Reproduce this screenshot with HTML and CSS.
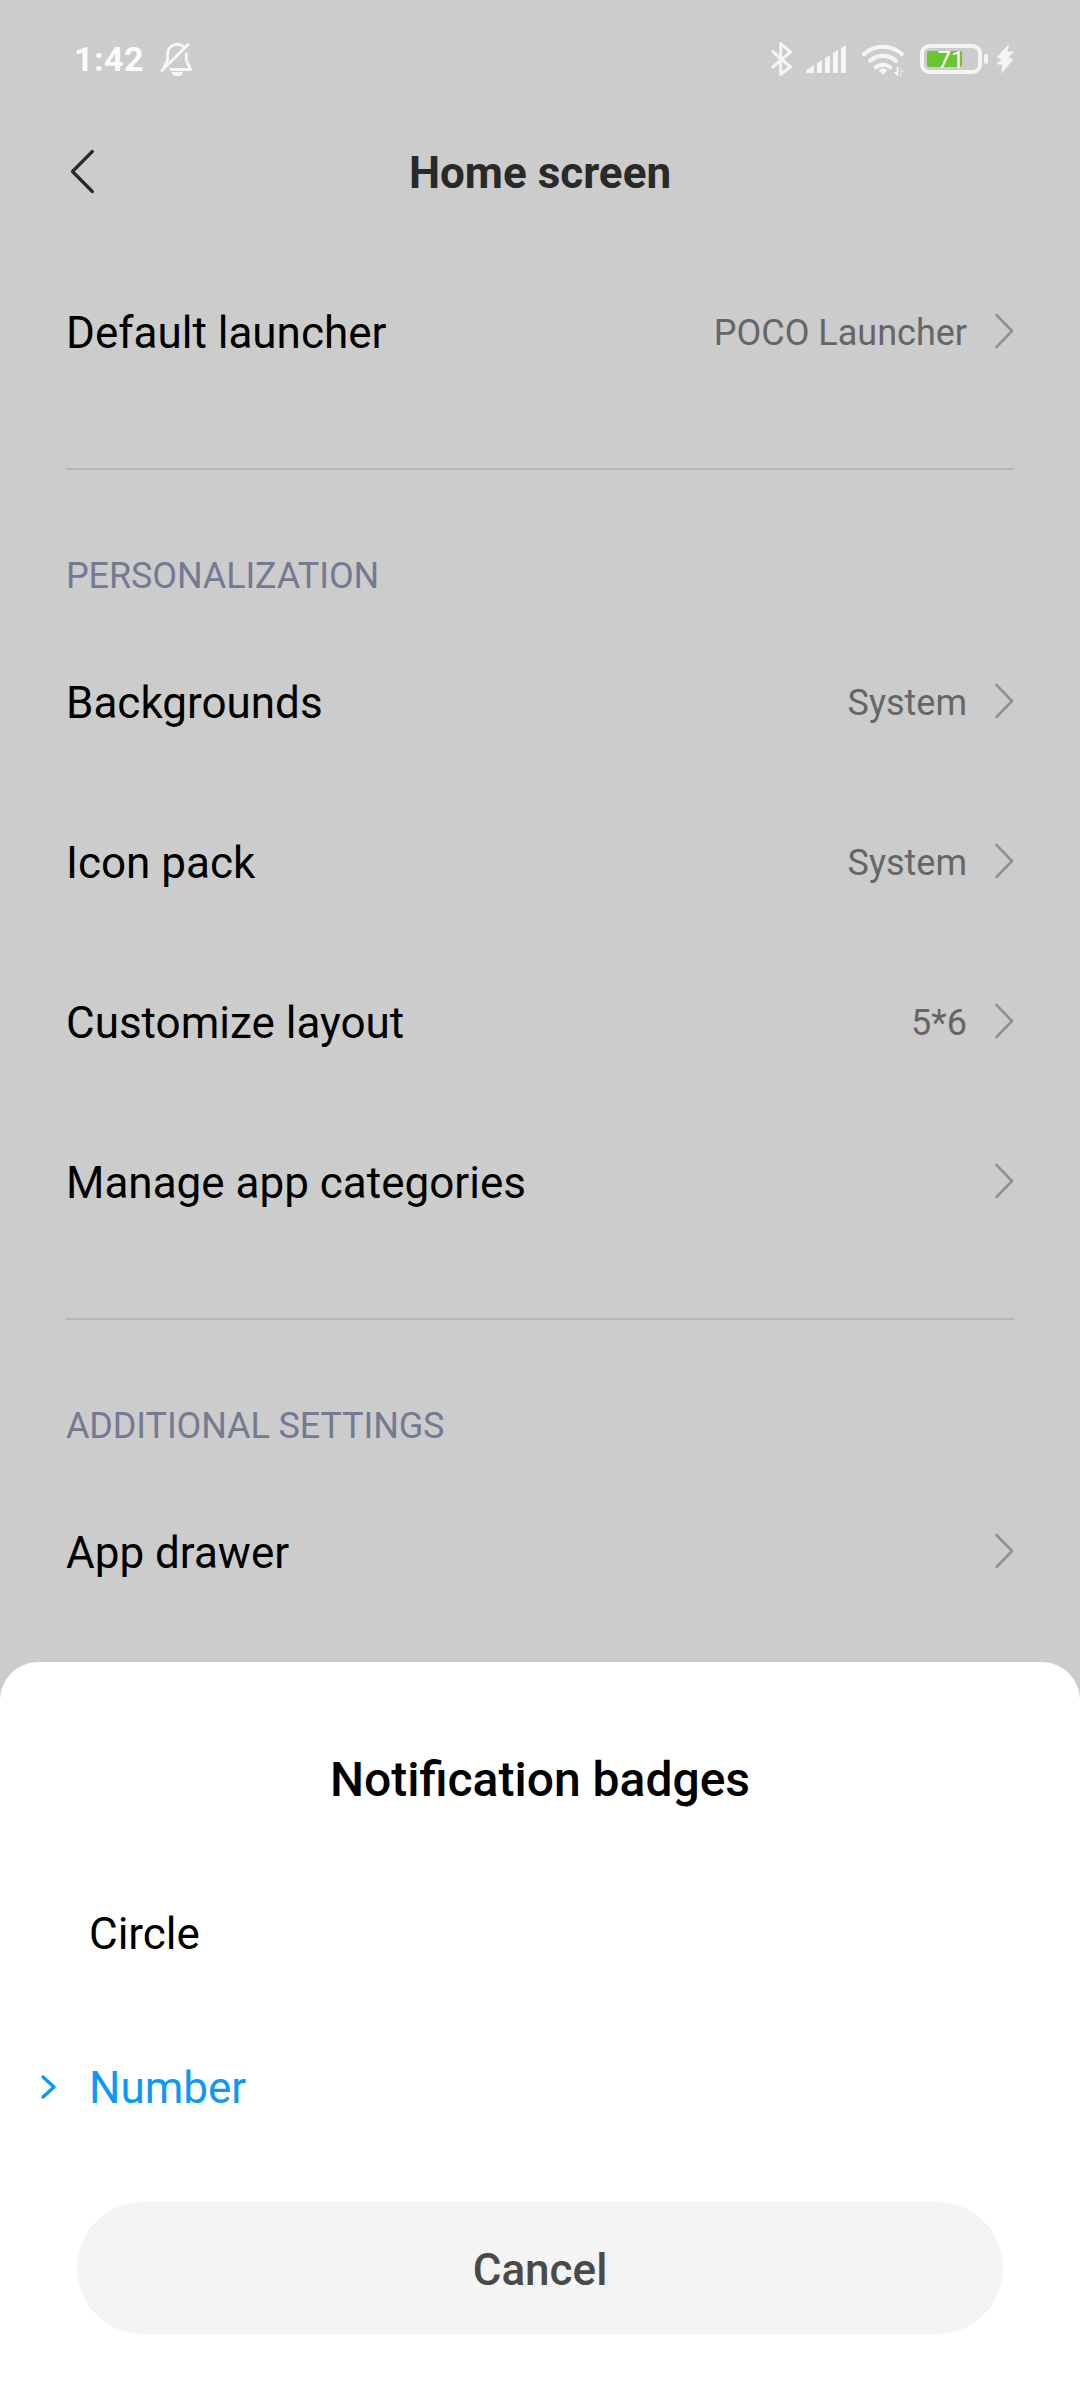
FILE: index.html
```html
<!DOCTYPE html>
<html lang="en">
<head>
<meta charset="utf-8">
<title>Home screen</title>
<link rel="stylesheet" href="styles.css">
</head>
<body>
<div class="screen">
  <header class="status">
    <div class="status-left">
      <span class="time">1:42</span>
      <svg class="bell" width="36" height="36" viewBox="158 41 36 36" fill="none" stroke="#f7f7f7" stroke-width="2.9" stroke-linecap="round" stroke-linejoin="round">
        <path d="M167.500 60V54a9.800 9.800 0 0 1 16-7.500M186.300 54V60.500l4.200 9H171M162 70.500L188 44.500M167.500 60l-3.500 7.500"/>
        <path d="M171.500 72h11.500a5.600 4 0 0 1-11.500 0z" fill="#f7f7f7" stroke="none"/>
      </svg>
    </div>
    <svg class="status-icons" width="260" height="44" viewBox="765 37 260 44" fill="none">
      <path d="M772.800 51.500L790.500 67L780.700 74.300V43.500L790.500 52L772.800 67" stroke="#f4f4f4" stroke-width="3" stroke-linecap="round" stroke-linejoin="round"/>
      <path fill="#f4f4f4" d="M806 73v-2.500l8-5.500v8zM817 63l5-3v13h-5zM825 58l5-3v18h-5zM833 53l5-3v23h-5zM841 48l5-3v28h-5z"/>
      <g stroke="#f4f4f4" stroke-width="4.200" stroke-linecap="round">
        <path d="M864.200 54a28 28 0 0 1 37.600 0M870.200 60.700a19.500 19.500 0 0 1 25.600 0M875.900 67.200a11.500 11.500 0 0 1 14.200 0"/>
      </g>
      <path d="M879 69.700a6 6 0 0 1 8 0v1.200l-4 3.600l-4-3.600z" fill="#f4f4f4"/>
      <path d="M898.500 67v10l-5-5h3V67z" fill="#f4f4f4"/>
      <path d="M900 77v-10l4.500 5h-3v5z" fill="#dedede"/>
      <rect x="922" y="46" width="58" height="26" rx="7.500" stroke="#f4f4f4" stroke-width="4"/>
      <rect x="927" y="51" width="35" height="16" rx="2" fill="#6ac52f"/>
      <rect x="984" y="54" width="4" height="10" rx="2" fill="#f4f4f4"/>
      <path d="M1009 44L996.700 57.500L1001.500 59.500L996 64L1002.500 65L1001 73.800L1013.500 59.500L1008.500 57.300L1014.300 51.500H1007.500z" fill="#f4f4f4"/>
      <text class="battery" x="937.500" y="68">71</text>
    </svg>
  </header>
  <div class="appbar">
    <svg class="back" width="30" height="50" viewBox="0 0 30 50"><path d="M26.300 5.500L6.500 25.500L26.300 45.500"/></svg>
    <h1 class="title">Home screen</h1>
  </div>
  <main class="list">
    <div class="row"><span class="label">Default launcher</span><span class="value">POCO Launcher</span><svg class="chev" width="20" height="38" viewBox="0 0 20 38"><path d="M2.500 3L18 19L2.500 35"/></svg></div>
    <div class="rule"></div>
    <h2 class="section">PERSONALIZATION</h2>
    <div class="row"><span class="label">Backgrounds</span><span class="value">System</span><svg class="chev" width="20" height="38" viewBox="0 0 20 38"><path d="M2.500 3L18 19L2.500 35"/></svg></div>
    <div class="row"><span class="label">Icon pack</span><span class="value">System</span><svg class="chev" width="20" height="38" viewBox="0 0 20 38"><path d="M2.500 3L18 19L2.500 35"/></svg></div>
    <div class="row"><span class="label">Customize layout</span><span class="value">5*6</span><svg class="chev" width="20" height="38" viewBox="0 0 20 38"><path d="M2.500 3L18 19L2.500 35"/></svg></div>
    <div class="row"><span class="label">Manage app categories</span><svg class="chev" width="20" height="38" viewBox="0 0 20 38"><path d="M2.500 3L18 19L2.500 35"/></svg></div>
    <div class="rule"></div>
    <h2 class="section">ADDITIONAL SETTINGS</h2>
    <div class="row"><span class="label">App drawer</span><svg class="chev" width="20" height="38" viewBox="0 0 20 38"><path d="M2.500 3L18 19L2.500 35"/></svg></div>
  </main>
  <section class="sheet">
    <h2 class="sheet-title">Notification badges</h2>
    <div class="option">Circle</div>
    <div class="option selected"><svg class="mark" width="20" height="28" viewBox="0 0 20 28"><path d="M4 4L15 14L4 24"/></svg>Number</div>
    <button class="cancel">Cancel</button>
  </section>
</div>
</body>
</html>
```
FILE: styles.css
```css
* { box-sizing: border-box; }
body { margin: 0; font-family: Roboto, sans-serif; background: #cccccc; }
h1, h2 { margin: 0; }
svg { display: block; flex: none; }
.screen { width: 1080px; height: 2400px; display: flex; flex-direction: column; background: #cccccc; overflow: hidden; }
.status { height: 118px; padding: 37px 55px 0 74px; display: flex; justify-content: space-between; }
.status-left { display: flex; height: 44px; }
.time { font-size: 34px; font-weight: 700; line-height: 45px; color: #fbfbfb; letter-spacing: 0.5px; width: 84px; }
.bell { margin-top: 4px; }
.battery { font: 400 24px Roboto, sans-serif; fill: #ffffff; }
.appbar { height: 134px; padding: 28px 66px 0; display: grid; grid-template-columns: 30px 1fr 30px; }
.back path { fill: none; stroke: #292929; stroke-width: 3.2; stroke-linecap: round; stroke-linejoin: round; }
.title { text-align: center; font-size: 44px; font-weight: 700; line-height: 54px; color: #292929; }
.list { height: 1410px; padding: 0 66px; }
.row { height: 160px; display: flex; align-items: center; }
.label { flex: 1; padding-top: 1px; font-size: 44px; color: #000; }
.value { padding-top: 2px; font-size: 36px; color: #666666; margin-right: 27px; }
.chev { margin-bottom: 2px; }
.chev path { fill: none; stroke: #919191; stroke-width: 2.6; stroke-linecap: round; stroke-linejoin: round; }
.rule { height: 2px; margin-top: 56px; background: #b7b7b7; }
.section { height: 152px; padding-top: 85px; font-size: 36px; font-weight: 400; line-height: 42px; letter-spacing: -0.12px; color: #747a91; }
.sheet { flex: 1; display: flex; flex-direction: column; background: #fff; border-radius: 38px 38px 0 0; padding-top: 88px; }
.sheet-title { font-size: 48px; font-weight: 500; line-height: 60px; text-align: center; color: #000; margin-bottom: 47px; }
.option { height: 154px; padding-left: 89px; font-size: 44px; line-height: 154px; color: #000; position: relative; }
.selected { color: #0d97f8; }
.mark { position: absolute; left: 39px; top: 62px; }
.mark path { fill: none; stroke: #0d97f8; stroke-width: 3.4; stroke-linecap: round; stroke-linejoin: round; }
.cancel { margin: 37px 77px 0; height: 132px; flex: none; border: 0; border-radius: 66px; padding: 3px 0 0; background: #f4f4f4; font: 500 44px Roboto, sans-serif; color: #4a4a4a; }
```
